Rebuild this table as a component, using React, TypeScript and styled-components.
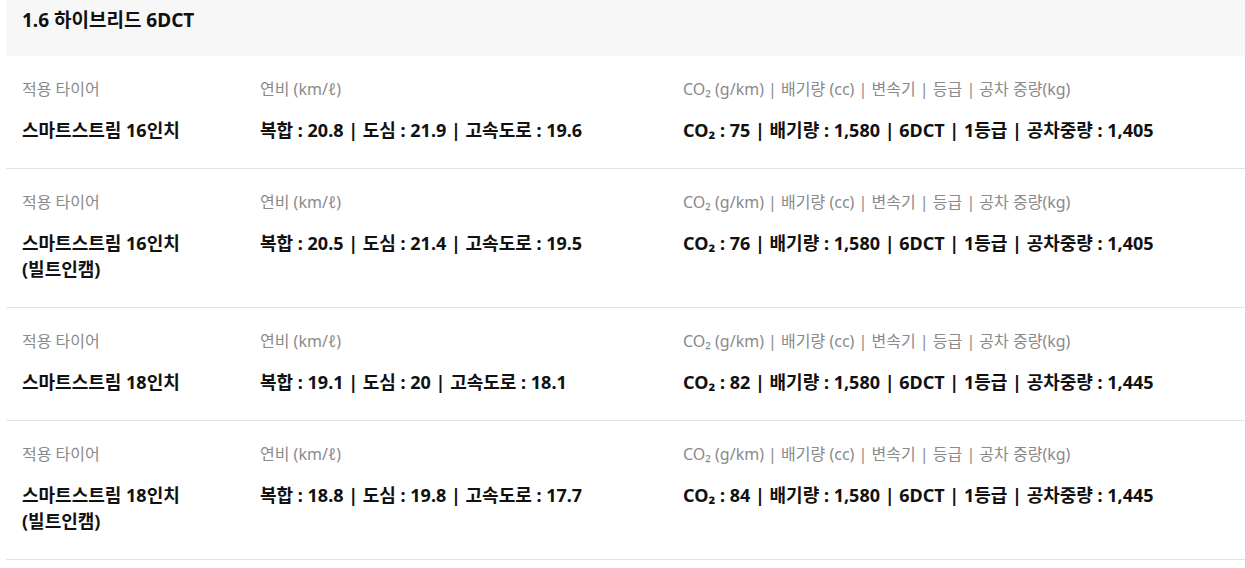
import React from "react";
import styled, { createGlobalStyle } from "styled-components";

const Global = createGlobalStyle`
  html, body { margin: 0; padding: 0; background: #fff; }
  body { font-family: "Noto Sans", "Noto Sans CJK KR", sans-serif; color: #111; }
`;

const Wrap = styled.div`
  padding-left: 6px;
`;

const Header = styled.div`
  background: #f7f7f7;
  height: 56px;
  padding: 8px 16px 0;
  box-sizing: border-box;
`;

const Title = styled.h3`
  margin: 0;
  font-size: 19px;
  line-height: 24px;
  font-weight: 700;
  color: #111;
`;

const Row = styled.div`
  display: grid;
  grid-template-columns: 238px 423px 1fr;
  padding: 22px 16px 25px;
  border-bottom: 1px solid #e2e2e2;
`;

const Cell = styled.div`
  display: flex;
  flex-direction: column;
  gap: 17px;
`;

const Label = styled.div`
  font-size: 16px;
  line-height: 22px;
  color: #8a8a8a;
  font-weight: 400;
  white-space: nowrap;
`;

const Value = styled.div`
  font-size: 18px;
  line-height: 26px;
  font-weight: 700;
  color: #111;
  white-space: nowrap;
`;

type Item = { tire: string[]; fuel: string; spec: string };

const items: Item[] = [
  { tire: ["스마트스트림 16인치"], fuel: "복합 : 20.8 | 도심 : 21.9 | 고속도로 : 19.6", spec: "CO₂ : 75 | 배기량 : 1,580 | 6DCT | 1등급 | 공차중량 : 1,405" },
  { tire: ["스마트스트림 16인치", "(빌트인캠)"], fuel: "복합 : 20.5 | 도심 : 21.4 | 고속도로 : 19.5", spec: "CO₂ : 76 | 배기량 : 1,580 | 6DCT | 1등급 | 공차중량 : 1,405" },
  { tire: ["스마트스트림 18인치"], fuel: "복합 : 19.1 | 도심 : 20 | 고속도로 : 18.1", spec: "CO₂ : 82 | 배기량 : 1,580 | 6DCT | 1등급 | 공차중량 : 1,445" },
  { tire: ["스마트스트림 18인치", "(빌트인캠)"], fuel: "복합 : 18.8 | 도심 : 19.8 | 고속도로 : 17.7", spec: "CO₂ : 84 | 배기량 : 1,580 | 6DCT | 1등급 | 공차중량 : 1,445" },
];

export default function App() {
  return (
    <>
      <Global />
      <Wrap>
        <Header>
          <Title>1.6 하이브리드 6DCT</Title>
        </Header>
        {items.map((it, i) => (
          <Row key={i}>
            <Cell>
              <Label>적용 타이어</Label>
              <Value>
                {it.tire.map((t, j) => (
                  <div key={j}>{t}</div>
                ))}
              </Value>
            </Cell>
            <Cell>
              <Label>연비 (km/ℓ)</Label>
              <Value>{it.fuel}</Value>
            </Cell>
            <Cell>
              <Label>CO₂ (g/km) | 배기량 (cc) | 변속기 | 등급 | 공차 중량(kg)</Label>
              <Value>{it.spec}</Value>
            </Cell>
          </Row>
        ))}
      </Wrap>
    </>
  );
}
